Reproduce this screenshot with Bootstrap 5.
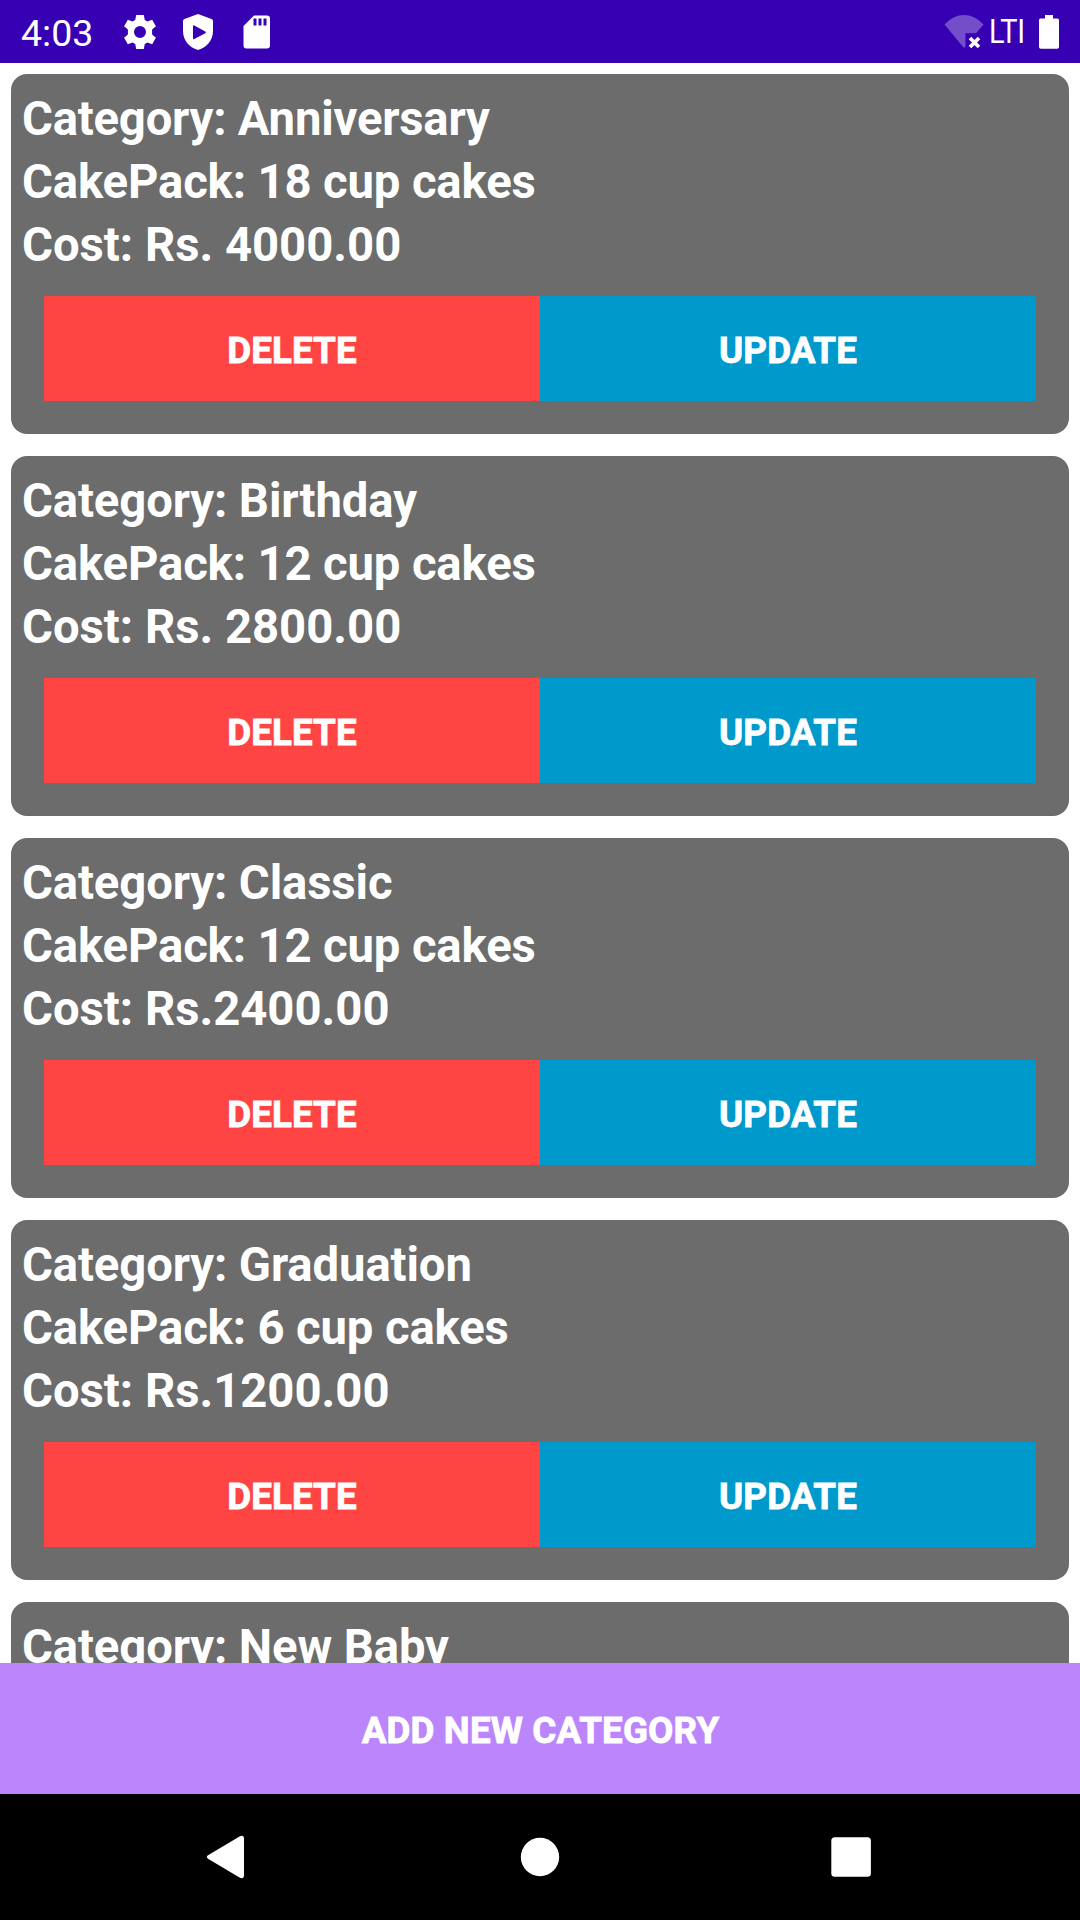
<!DOCTYPE html>
<html lang="en">
<head>
<meta charset="utf-8">
<meta name="viewport" content="width=device-width, initial-scale=1">
<title>Cake categories</title>
<link href="https://cdn.jsdelivr.net/npm/bootstrap@5.3.0/dist/css/bootstrap.min.css" rel="stylesheet">
<style>
body{font-family:Roboto,"Liberation Sans",sans-serif}
.screen{height:1920px;width:1080px}
.status-bar{height:63px;background:#3700b3;padding:0 20px 0 21px}
.clock{font-size:37.5px;line-height:61px;width:71px;margin-right:31px;padding-top:4px}
.network{font-size:32.5px;line-height:58px;width:49px;letter-spacing:-.4px;margin:0 0 0 5px;transform:scaleX(.89);transform-origin:0 50%}
.cake-list{padding:11px 11px 0;gap:22px}
.cake-card{background:#6c6c6c;border-radius:16px;height:360px;padding:14px 33px 33px 11px;border:0}
.cake-text{font-size:47.25px;line-height:63px}
.cake-name{letter-spacing:-.11px}
.cake-name-tight{letter-spacing:-.21px}
.cake-pack{letter-spacing:-.14px}
.cake-actions{margin:19px 0 0 22px}
.flat-btn{border:0;border-radius:0;font-size:36.75px;line-height:43px;font-weight:700;padding:33px 0 29px;color:#fff;-webkit-text-stroke:.8px #fff;letter-spacing:.1px}
.btn-remove{background:#ff4444}
.btn-edit{background:#0099cc}
.btn-create{background:#bb86fc;height:131px;padding:46px 0 42px 1px;letter-spacing:.15px}
.nav-keys{height:126px}
</style>
</head>
<body>
<div class="screen d-flex flex-column overflow-hidden bg-white">
  <header class="status-bar d-flex align-items-center text-white flex-shrink-0">
    <span class="clock">4:03</span>
    <svg width="34" height="36" viewBox="0 0 34 36" fill="#fff"><path fill-rule="evenodd" d="M13.2 1h7.6l1 5 2.6 1.500 4.800-1.700 3.700 6.400-3.800 3.300v5l3.800 3.300-3.700 6.400-4.800-1.700-2.600 1.500-1 5h-7.600l-1-5-2.600-1.500-4.800 1.700-3.700-6.400 3.800-3.300v-5L1.100 12.200l3.700-6.400 4.800 1.700L12.200 6z M17 12a6 6 0 1 0 0 12 6 6 0 0 0 0-12z"/></svg>
    <svg style="margin-left:25px" width="32" height="38" viewBox="0 0 32 38" fill="#fff"><path fill-rule="evenodd" d="M16 1l13.500 5q1.500.6 1.500 2v10c0 9-6 16.500-15 19C7 34.500 1 27 1 18V8q0-1.400 1.500-2z M11 13.200v12q0 1.400 1.300.7l11-5.700q1.200-.8 0-1.600l-11-6q-1.300-.7-1.300.6z"/></svg>
    <svg style="margin-left:29px" width="28" height="34" viewBox="0 0 28 34" fill="#fff"><path fill-rule="evenodd" d="M11 .5h13q3 0 3 3v27q0 3-3 3H3.500q-3 0-3-3V11z M10.500 3.500v7h3v-7z M15.500 3.500v7h3v-7z M20.500 3.500v7h3v-7z"/></svg>
    <svg class="ms-auto" width="40" height="36" viewBox="0 0 40 36"><path fill="#fff" fill-opacity=".3" d="M.5 10.500Q9 1 20 1T39.500 10.500L32 19.300H21.500v13L20 34z"/><path d="M26 24l9 9m0-9l-9 9" stroke="#fff" stroke-width="3.600"/></svg>
    <span class="network text-nowrap">LTI</span>
    <svg width="22" height="34" viewBox="0 0 22 34" fill="#fff"><path d="M7 0h8v3.500h4.500q1.500 0 1.500 1.500v27q0 1.800-1.800 1.800H2.800Q1 33.800 1 32V5q0-1.500 1.500-1.500H7z"/></svg>
  </header>

  <main class="cake-list d-flex flex-column flex-grow-1 overflow-hidden">
    <article class="cake-card card flex-shrink-0">
      <div class="cake-text fw-bold text-white"><div class="cake-name-tight">Category: Anniversary</div><div class="cake-pack">CakePack: 18 cup cakes</div><div>Cost: Rs. 4000.00</div></div>
      <div class="cake-actions d-flex"><button class="btn flat-btn btn-remove flex-fill w-50">DELETE</button><button class="btn flat-btn btn-edit flex-fill w-50">UPDATE</button></div>
    </article>
    <article class="cake-card card flex-shrink-0">
      <div class="cake-text fw-bold text-white"><div class="cake-name">Category: Birthday</div><div class="cake-pack">CakePack: 12 cup cakes</div><div>Cost: Rs. 2800.00</div></div>
      <div class="cake-actions d-flex"><button class="btn flat-btn btn-remove flex-fill w-50">DELETE</button><button class="btn flat-btn btn-edit flex-fill w-50">UPDATE</button></div>
    </article>
    <article class="cake-card card flex-shrink-0">
      <div class="cake-text fw-bold text-white"><div class="cake-name">Category: Classic</div><div class="cake-pack">CakePack: 12 cup cakes</div><div>Cost: Rs.2400.00</div></div>
      <div class="cake-actions d-flex"><button class="btn flat-btn btn-remove flex-fill w-50">DELETE</button><button class="btn flat-btn btn-edit flex-fill w-50">UPDATE</button></div>
    </article>
    <article class="cake-card card flex-shrink-0">
      <div class="cake-text fw-bold text-white"><div class="cake-name">Category: Graduation</div><div class="cake-pack">CakePack: 6 cup cakes</div><div>Cost: Rs.1200.00</div></div>
      <div class="cake-actions d-flex"><button class="btn flat-btn btn-remove flex-fill w-50">DELETE</button><button class="btn flat-btn btn-edit flex-fill w-50">UPDATE</button></div>
    </article>
    <article class="cake-card card flex-shrink-0">
      <div class="cake-text fw-bold text-white"><div class="cake-name">Category: New Baby</div></div>
    </article>
  </main>

  <button class="btn flat-btn btn-create flex-shrink-0 w-100">ADD NEW CATEGORY</button>

  <nav class="nav-keys bg-black flex-shrink-0">
    <svg class="d-block" width="1080" height="126" viewBox="0 0 1080 126" fill="#fff"><path d="M208 61.300L239.500 42.500Q244 40.500 244 44.500V81.500Q244 85.500 239.500 83.500L208 64.700Q205.500 63 208 61.300z"/><circle cx="540" cy="63" r="19.200"/><rect x="831.300" y="43.200" width="39.600" height="39.600" rx="3.500"/></svg>
  </nav>
</div>
<script src="https://cdn.jsdelivr.net/npm/bootstrap@5.3.0/dist/js/bootstrap.bundle.min.js"></script>
</body>
</html>
